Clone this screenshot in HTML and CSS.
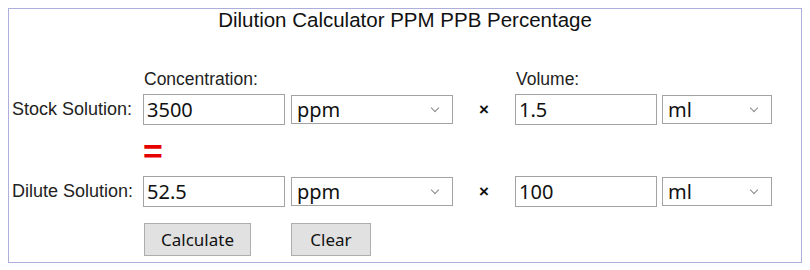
FILE: index.html
```html
<!DOCTYPE html>
<html lang="en">
<head>
    <meta charset="UTF-8">
    <title>Dilution Calculator PPM PPB Percentage</title>
    <link rel="stylesheet" href="styles.css">
</head>
<body>

    <div class="calc">
        <h1 class="title">Dilution Calculator PPM PPB Percentage</h1>

        <div class="grid">
            <!-- en-têtes -->
            <span class="head col-c">Concentration:</span>
            <span class="head col-v">Volume:</span>

            <!-- solution mère -->
            <label class="row-label" for="c1">Stock Solution:</label>
            <input class="num" type="text" id="c1" value="3500">
            <span class="unit">
                <select id="c1unit">
                    <option>ppm</option>
                    <option>ppb</option>
                    <option>%</option>
                </select>
            </span>
            <span class="times">&times;</span>
            <input class="num" type="text" id="v1" value="1.5">
            <span class="unit">
                <select id="v1unit">
                    <option>ml</option>
                    <option>l</option>
                </select>
            </span>

            <span class="equals">=</span>

            <!-- solution diluée -->
            <label class="row-label" for="c2">Dilute Solution:</label>
            <input class="num" type="text" id="c2" value="52.5">
            <span class="unit">
                <select id="c2unit">
                    <option>ppm</option>
                    <option>ppb</option>
                    <option>%</option>
                </select>
            </span>
            <span class="times">&times;</span>
            <input class="num" type="text" id="v2" value="100">
            <span class="unit">
                <select id="v2unit">
                    <option>ml</option>
                    <option>l</option>
                </select>
            </span>

            <div class="buttons-a"><button class="btn btn-calc" onclick="calculate()">Calculate</button></div>
            <div class="buttons-b"><button class="btn btn-clear" onclick="clearAll()">Clear</button></div>
        </div>
    </div>

    <script>
        // C1 x V1 = C2 x V2, on cherche C2
        function calculate() {
            const c1 = parseFloat(document.getElementById('c1').value);
            const v1 = parseFloat(document.getElementById('v1').value);
            const v2 = parseFloat(document.getElementById('v2').value);
            if (!isNaN(c1) && !isNaN(v1) && v2) {
                document.getElementById('c2').value = +(c1 * v1 / v2).toFixed(4);
            }
        }

        function clearAll() {
            ['c1', 'v1', 'c2', 'v2'].forEach(function (id) {
                document.getElementById(id).value = '';
            });
        }
    </script>

</body>
</html>
```

FILE: styles.css
```css
body {
    margin: 0;
    padding: 8px;
    background-color: #fff;
    color: #222;
    font-family: "Liberation Sans", Arial, sans-serif;
}
.calc {
    width: 792px;
    height: 253px;
    border: 1px solid #aeaedd;
    background-color: #fff;
}
.title {
    margin: 0;
    font-size: 20.5px;
    font-weight: normal;
    line-height: 22px;
    text-align: center;
    color: #111;
}
.grid {
    display: grid;
    grid-template-columns: 125px 142px 162px 50px 141px 110px;
    grid-template-rows: 25px 31px 51px 31px 49px;
    column-gap: 6px;
    row-gap: 0;
    margin-top: 38px;
    padding-left: 3px;
    align-items: center;
}
.head {
    align-self: start;
    font-size: 17.5px;
    line-height: 20px;
    padding-left: 1px;
}
.col-c {
    grid-column: 2;
}
.col-v {
    grid-column: 5;
}
.row-label {
    grid-column: 1;
    font-size: 18px;
    white-space: nowrap;
}
.num {
    box-sizing: border-box;
    width: 142px;
    height: 31px;
    margin: 0;
    padding: 0 3px;
    border: 1px solid #a3a3a3;
    font-family: "Noto Sans", "Open Sans", sans-serif;
    font-size: 20px;
    color: #111;
    outline: none;
}
.unit {
    position: relative;
    display: block;
}
.unit select {
    box-sizing: border-box;
    appearance: none;
    -webkit-appearance: none;
    width: 100%;
    height: 29px;
    margin: 0;
    padding: 0 0 0 5px;
    border: 1px solid #a3a3a3;
    border-radius: 0;
    background-color: #fff;
    font-family: "Noto Sans", "Open Sans", sans-serif;
    font-size: 20px;
    color: #111;
}
/* petite flèche du menu */
.unit::after {
    content: "";
    position: absolute;
    right: 15px;
    top: 10px;
    width: 5px;
    height: 5px;
    border-right: 1px solid #888;
    border-bottom: 1px solid #888;
    transform: rotate(45deg);
    pointer-events: none;
}
.times {
    text-align: center;
    font-size: 17px;
    font-weight: bold;
    color: #111;
}
.equals {
    grid-column: 2;
    font-size: 34px;
    font-weight: bold;
    line-height: 34px;
    color: #e60000;
}
.buttons-a,
.buttons-b {
    align-self: end;
}
.buttons-a {
    grid-column: 2;
}
.buttons-b {
    grid-column: 3;
}
.btn {
    box-sizing: border-box;
    height: 33px;
    margin: 0 0 0 1px;
    padding: 0;
    border: 1px solid #adadad;
    border-radius: 0;
    background-color: #e1e1e1;
    font-family: "Noto Sans", "Open Sans", sans-serif;
    font-size: 17px;
    color: #111;
    cursor: pointer;
}
.btn-calc {
    width: 107px;
}
.btn-clear {
    width: 80px;
    margin-left: 0;
}
.btn:hover {
    background-color: #e5f1fb;
    border-color: #0078d7;
}
```
